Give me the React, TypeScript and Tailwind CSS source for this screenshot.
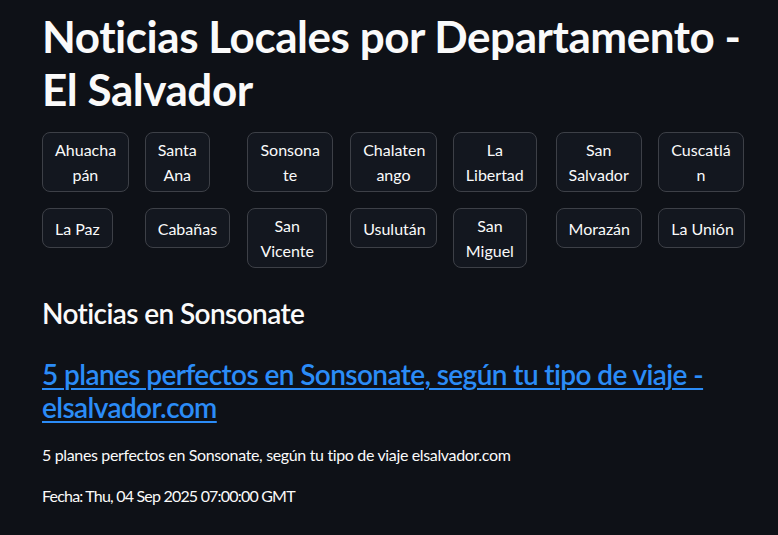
const rows: string[][][] = [
  [["Ahuacha", "pán"], ["Santa", "Ana"], ["Sonsona", "te"], ["Chalaten", "ango"], ["La", "Libertad"], ["San", "Salvador"], ["Cuscatlá", "n"]],
  [["La Paz"], ["Cabañas"], ["San", "Vicente"], ["Usulután"], ["San", "Miguel"], ["Morazán"], ["La Unión"]],
];

function DeptButton({ lines }: { lines: string[] }) {
  return (
    <button className="max-w-full min-h-[40px] rounded-lg border border-[#3d4047] bg-[#13171f] px-3 py-1 text-base leading-[25px] text-[#fafafa]">
      {lines.map((l) => (
        <span key={l} className="block whitespace-nowrap">
          {l}
        </span>
      ))}
    </button>
  );
}

export default function App() {
  return (
    <div className="min-h-screen bg-[#0e1117] pl-[42px] pr-[33px] pt-[10px] text-[#fafafa] font-['Source_Sans_Pro','Lato',sans-serif]">
      <h1 className="text-[44px] font-bold leading-[53px] tracking-[-0.45px]">
        <span className="whitespace-nowrap">Noticias Locales por Departamento -</span>
        <br />
        El Salvador
      </h1>

      <div className="mt-[16px] flex flex-col gap-4">
        {rows.map((row, i) => (
          <div key={i} className="grid grid-cols-7 gap-4 items-start">
            {row.map((lines) => (
              <div key={lines.join("")}>
                <DeptButton lines={lines} />
              </div>
            ))}
          </div>
        ))}
      </div>

      <h3 className="mt-[28px] text-[28px] font-semibold leading-[34px] tracking-[-0.6px]">Noticias en Sonsonate</h3>

      <h3 className="mt-[28px] text-[28px] font-semibold leading-[33px] tracking-[-0.6px]">
        <a href="#" className="text-[#2b8cf7] underline underline-offset-[3px] decoration-[1.5px]">
          <span className="whitespace-nowrap">5 planes perfectos en Sonsonate, según tu tipo de viaje -</span>
          <br />
          elsalvador.com
        </a>
      </h3>

      <p className="mt-[18px] text-base leading-[26px] tracking-[-0.35px]">
        5 planes perfectos en Sonsonate, según tu tipo de viaje elsalvador.com
      </p>
      <p className="mt-[15px] text-base leading-[26px] tracking-[-0.8px]">Fecha: Thu, 04 Sep 2025 07:00:00 GMT</p>
    </div>
  );
}
